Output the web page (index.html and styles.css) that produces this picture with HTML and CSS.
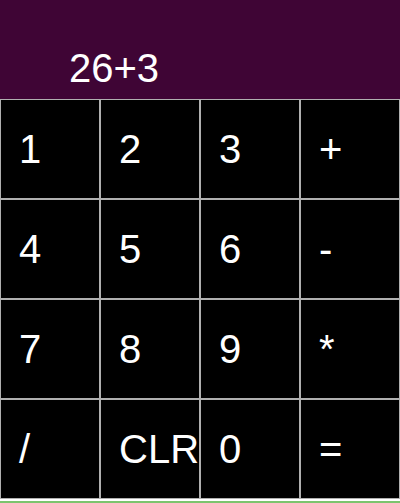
FILE: index.html
```html
<!DOCTYPE html>
<html>
<head>
<meta charset="utf-8">
<link rel="stylesheet" href="styles.css">
</head>
<body>
<div class="calc">
  <div class="display"><span class="expr">26+3</span></div>
  <div class="keys">
    <div class="key">1</div>
    <div class="key">2</div>
    <div class="key">3</div>
    <div class="key">+</div>
    <div class="key">4</div>
    <div class="key">5</div>
    <div class="key">6</div>
    <div class="key">-</div>
    <div class="key">7</div>
    <div class="key">8</div>
    <div class="key">9</div>
    <div class="key">*</div>
    <div class="key">/</div>
    <div class="key">CLR</div>
    <div class="key">0</div>
    <div class="key">=</div>
  </div>
  <div class="strip"></div>
</div>
</body>
</html>
```
FILE: styles.css
```css
html, body {
  margin: 0;
  padding: 0;
  background: #ffffff;
}
body {
  font-family: "Liberation Sans", Arial, sans-serif;
  width: 400px;
  height: 503px;
  overflow: hidden;
}
.calc {
  display: flex;
  flex-direction: column;
  width: 400px;
}
.display {
  height: 100px;
  box-sizing: border-box;
  background: #3f0535;
  color: #ffffff;
  display: flex;
  align-items: flex-end;
  padding-left: 69px;
  padding-bottom: 9px;
  font-size: 40px;
  line-height: 46px;
}
.keys {
  display: grid;
  grid-template-columns: repeat(4, 100px);
  grid-auto-rows: 100px;
  margin-top: -1px;
}
.key {
  box-sizing: border-box;
  border: 1px solid #b0b0b0;
  background: #000000;
  color: #ffffff;
  font-size: 40px;
  line-height: 46px;
  display: flex;
  align-items: center;
  padding-left: 18px;
  white-space: nowrap;
}
.strip {
  margin-top: 2px;
  height: 4px;
  background: #7cc46e;
}
```
